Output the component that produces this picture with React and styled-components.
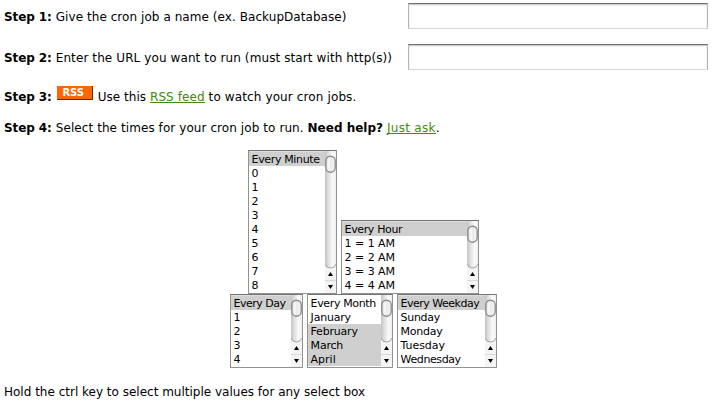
import React from "react";
import styled, { createGlobalStyle } from "styled-components";

const GlobalStyle = createGlobalStyle`
  html, body { margin: 0; background: #fff; }
  body { overflow: hidden; }
`;

const Page = styled.main`
  box-sizing: border-box;
  display: flex;
  flex-direction: column;
  width: 719px;
  height: 406px;
  padding: 3px 11px 0 4px;
  background: #fff;
  color: #000;
  font: 12px/14px "DejaVu Sans", Verdana, sans-serif;
`;

const Step = styled.div`
  display: flex;
  align-items: flex-start;
  justify-content: space-between;
  height: ${(p) => p.$height}px;
  padding-top: ${(p) => p.$top || 0}px;
  box-sizing: border-box;
`;

const Label = styled.p`
  display: flex;
  margin: ${(p) => p.$drop || 0}px 0 0;
  white-space: pre;
`;

const Strong = styled.strong`
  letter-spacing: ${(p) => p.$track || 0}px;
  margin-right: 4px;
`;

const Text = styled.span`
  letter-spacing: ${(p) => p.$track || 0}px;
`;

const Link = styled.a`
  height: 12px;
  border-bottom: 1px solid #3f8a0b;
  color: #3f8a0b;
  text-decoration: none;
  letter-spacing: ${(p) => p.$track || 0}px;
`;

const RssBadge = styled.span`
  box-sizing: border-box;
  width: 36px;
  height: 14px;
  margin: -4px 5px 0 1px;
  padding: 1px 2px 0 0;
  border: solid #6b2a00;
  border-width: 0 1px 1px 0;
  background: #ff6600;
  color: #fff;
  font: bold 10px/12px "DejaVu Sans", Verdana, sans-serif;
  text-align: center;
`;

const Field = styled.input`
  box-sizing: border-box;
  width: 300px;
  height: 26px;
  padding: 3px;
  border: 1px solid;
  border-color: #6e6e6e #b4b4b4 #d6d6d6;
  border-radius: 0;
  outline: 0;
  background: #fff;
  box-shadow: inset 0 1px #cecece, inset 0 2px #f1f1f1, inset 1px 0 #f4f4f4, inset -1px 0 #f4f4f4;
`;

const Schedule = styled.section`
  display: flex;
  flex-direction: column;
  width: 267px;
  margin-left: 226px;
`;

const ListRow = styled.div`
  display: flex;
  align-items: flex-end;
  gap: 4px;
  padding-left: ${(p) => p.$indent || 0}px;
`;

const ListFrame = styled.div`
  box-sizing: border-box;
  display: flex;
  width: ${(p) => p.$width}px;
  height: ${(p) => p.$rows * 14 + 4}px;
  border: 1px solid #929292;
  border-top-color: #747474;
  background: #fff;
`;

const Options = styled.ul`
  flex: 1;
  margin: 0;
  padding: 1px 0;
  list-style: none;
  background: linear-gradient(${(p) => (p.$first ? "#dedede" : "#fff")} 1px, #fff 1px);
`;

const Option = styled.li`
  box-sizing: border-box;
  height: 14px;
  padding: 1px 0 0 2.6px;
  background: ${(p) => (p.$selected ? "#cfcfcf" : "transparent")};
  font-size: 11px;
  line-height: 14px;
  letter-spacing: ${(p) => p.$track || 0}px;
  white-space: pre;
`;

const Bar = styled.svg`
  display: block;
  flex: none;
`;

function ScrollBar({ id, height }) {
  const end = height - 25;
  return (
    <Bar width="11" height={height} viewBox={`0 0 11 ${height}`}>
      <defs>
        <linearGradient id={`${id}-track`}>
          <stop offset="0" stopColor="#c4c4c4" />
          <stop offset="0.35" stopColor="#e2e2e2" />
          <stop offset="0.7" stopColor="#fbfbfb" />
          <stop offset="1" stopColor="#eeeeee" />
        </linearGradient>
        <linearGradient id={`${id}-thumb`}>
          <stop offset="0" stopColor="#dcdcdc" />
          <stop offset="0.35" stopColor="#fafafa" />
          <stop offset="0.55" stopColor="#e8e8e8" />
          <stop offset="1" stopColor="#fafafa" />
        </linearGradient>
      </defs>
      <rect width="11" height={height} fill="#f4f4f4" />
      <path d={`M0 0H11V${end - 5}Q11 ${end} 5.5 ${end}Q0 ${end} 0 ${end - 5}Z`} fill={`url(#${id}-track)`} />
      <path d={`M0 ${end - 4}Q1 ${end} 5.5 ${end}Q10 ${end} 11 ${end - 4}`} fill="none" stroke="#a6a6a6" />
      <rect x="0.8" y="5.2" width="9.4" height="16" rx="4.7" fill={`url(#${id}-thumb)`} stroke="#8c8c8c" strokeWidth="1.4" />
      <path d={`M0 ${height - 12.5}H11`} stroke="#dadada" />
      <path d={`M5.5 ${height - 21}L8 ${height - 17}H3Z M5.5 ${height - 4}L8 ${height - 8}H3Z`} fill="#000" />
    </Bar>
  );
}

function ListBox({ id, width, options }) {
  const height = options.length * 14 + 2;
  return (
    <ListFrame $width={width} $rows={options.length}>
      <Options $first={options[0].selected}>
        {options.map((o) => (
          <Option key={o.text} $selected={o.selected} $track={o.track}>
            {o.text}
          </Option>
        ))}
      </Options>
      <ScrollBar id={id} height={height} />
    </ListFrame>
  );
}

const numbers = (from, to) =>
  Array.from({ length: to - from + 1 }, (_, i) => ({ text: String(from + i) }));

const minutes = [{ text: "Every Minute", track: -0.36, selected: true }, ...numbers(0, 8)];
const hours = [
  { text: "Every Hour", track: -0.37, selected: true },
  ...[1, 2, 3, 4].map((n) => ({ text: `${n} = ${n} AM`, track: -0.04 })),
];
const days = [{ text: "Every Day", track: -0.5, selected: true }, ...numbers(1, 4)];
const months = [
  { text: "Every Month", track: -0.36 },
  { text: "January", track: -0.2 },
  { text: "February", track: -0.2, selected: true },
  { text: "March", track: -0.2, selected: true },
  { text: "April", selected: true },
];
const weekdays = [
  { text: "Every Weekday", track: -0.5, selected: true },
  { text: "Sunday", track: -0.3 },
  { text: "Monday", track: -0.25 },
  { text: "Tuesday", track: -0.06 },
  { text: "Wednesday", track: -0.4 },
];

export default function App() {
  return (
    <Page>
      <GlobalStyle />
      <Step $height={41}>
        <Label $drop={7}>
          <Strong $track={-0.1}>Step 1:</Strong>
          <Text $track={0.06}>Give the cron job a name (ex. BackupDatabase)</Text>
        </Label>
        <Field type="text" aria-label="Cron job name" />
      </Step>
      <Step $height={46}>
        <Label $drop={7}>
          <Strong $track={-0.1}>Step 2:</Strong>
          <Text $track={0.1}>Enter the URL you want to run (must start with http(s))</Text>
        </Label>
        <Field type="text" aria-label="URL to run" />
      </Step>
      <Step $height={31}>
        <Label>
          <Strong $track={-0.1}>Step 3:</Strong>
          <RssBadge>RSS</RssBadge>
          <Text $track={0.03}>Use this </Text>
          <Link $track={0.09}>RSS feed</Link>
          <Text $track={0.12}> to watch your cron jobs.</Text>
        </Label>
      </Step>
      <Step $height={29}>
        <Label>
          <Strong $track={-0.1}>Step 4:</Strong>
          <Text $track={0.08}>Select the times for your cron job to run. </Text>
          <Strong>Need help?</Strong>
          <Link $track={0.28}>Just ask</Link>
          <Text>.</Text>
        </Label>
      </Step>
      <Schedule>
        <ListRow $indent={18}>
          <ListBox id="minute" width={89} options={minutes} />
          <ListBox id="hour" width={138} options={hours} />
        </ListRow>
        <ListRow>
          <ListBox id="day" width={73} options={days} />
          <ListBox id="month" width={86} options={months} />
          <ListBox id="weekday" width={100} options={weekdays} />
        </ListRow>
      </Schedule>
      <Step $height={32} $top={17}>
        <Label>
          <Text>Hold the ctrl key to select multiple values for any select box</Text>
        </Label>
      </Step>
    </Page>
  );
}
